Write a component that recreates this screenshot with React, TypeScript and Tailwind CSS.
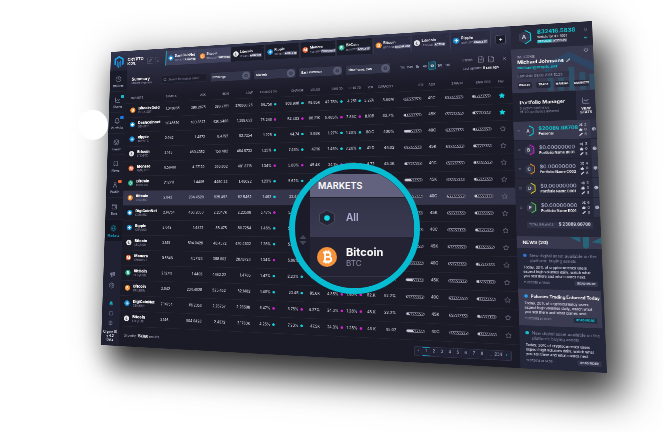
import React from "react";
import {
  Bell, Bookmark, ChartPie, ChevronDown, Cog, FileText, FileSpreadsheet, Globe, Grid2x2, Hexagon,
  Layers, LineChart, Megaphone, Menu, Pencil, Plus, Search, Settings, Shuffle, Star, User, Wallet, X, Power, ThumbsUp,
} from "lucide-react";

type Point = [number, number];

const BOARD_WIDTH = 960;
const BOARD_HEIGHT = 640;
const CORNERS: Point[] = [[111, 52], [592, 21], [607, 373], [101, 345]];

/** Perspective matrix that lays the flat board onto a four-cornered plane. */
function planeMatrix([p0, p1, p2, p3]: Point[], w: number, h: number) {
  const dx1 = p1[0] - p2[0], dx2 = p3[0] - p2[0], sx = p0[0] - p1[0] + p2[0] - p3[0];
  const dy1 = p1[1] - p2[1], dy2 = p3[1] - p2[1], sy = p0[1] - p1[1] + p2[1] - p3[1];
  const det = dx1 * dy2 - dx2 * dy1;
  const g = (sx * dy2 - dx2 * sy) / det;
  const k = (dx1 * sy - sx * dy1) / det;
  const m = [
    (p1[0] - p0[0] + g * p1[0]) / w, (p1[1] - p0[1] + g * p1[1]) / w, 0, g / w,
    (p3[0] - p0[0] + k * p3[0]) / h, (p3[1] - p0[1] + k * p3[1]) / h, 0, k / h,
    0, 0, 1, 0,
    p0[0], p0[1], 0, 1,
  ];
  return `matrix3d(${m.join(",")})`;
}

const ORANGE = "bg-[#f08a2c]";
const BLUE = "bg-[#1b8fd6]";
const WHITE = "bg-[#e4e4e6]";
const RED = "bg-[#ee6a3c]";
const GREEN = "bg-[#22a882]";

function Coin({ color, letter }: { color: string; letter: string }) {
  return (
    <span className={`flex size-3 shrink-0 items-center justify-center rounded-full text-[8px] leading-none font-bold ${color} ${color === WHITE ? "text-[#55566a]" : "text-white"}`}>
      {letter}
    </span>
  );
}

const TABS = [
  { name: "DashCoinNet", sub: "DSH/BTC", tag: "ANALYZE", color: BLUE, letter: "◆" },
  { name: "Bitcoin", sub: "BTC/USDT", tag: "WATCHED", color: ORANGE, letter: "₿" },
  { name: "Litecoin", sub: "LTC/BTC", tag: "ANALYZE", color: WHITE, letter: "Ł" },
  { name: "Ripple", sub: "XRP/BTC", tag: "ANALYZE", color: BLUE, letter: "✣" },
  { name: "Monero", sub: "XMR/BTC", tag: "EXCHANGE", color: RED, letter: "M" },
  { name: "BitCoin", sub: "BCH/BTC", tag: "ANALYZE", color: GREEN, letter: "₿" },
  { name: "Bitcoin", sub: "BTC/USD", tag: "EXCHANGE", color: ORANGE, letter: "₿" },
  { name: "Litecoin", sub: "LTC/USD", tag: "ACTIVE", color: WHITE, letter: "Ł" },
  { name: "Ripple", sub: "XRP/USD", tag: "ANALYZE", color: BLUE, letter: "✣" },
];

const NAV = [
  { label: "Wallets", icon: ChartPie, badge: "" },
  { label: "Charts", icon: LineChart, badge: "bg-[#14b8c4]" },
  { label: "Portfolio", icon: Bell, badge: "bg-[#1f74e0]" },
  { label: "Invest", icon: Layers, badge: "" },
  { label: "News", icon: Bookmark, badge: "" },
  { label: "Profile", icon: User, badge: "bg-[#ee6a3c]" },
  { label: "Bots", icon: Wallet, badge: "" },
  { label: "Markets", icon: Globe, badge: "" },
];

const COLS = [
  { head: "MARKETS", w: "w-[88px]" }, { head: "SYMBOL", w: "w-[48px]" }, { head: "ASK", w: "w-[44px]" },
  { head: "HIGH", w: "w-[50px]" }, { head: "LOW", w: "w-[51px]" }, { head: "CHANGE 1H", w: "w-[50px]" },
  { head: "CHANGE", w: "w-[56px]" }, { head: "VALUE", w: "w-[33px]" }, { head: "CHG 1D", w: "w-[45px]" },
  { head: "CHG 7D", w: "w-[36px]" }, { head: "VOL", w: "w-[25px]" }, { head: "CAPACITY", w: "w-[38px]" },
  { head: "RSI", w: "w-[56px]" }, { head: "ADX", w: "w-[22px]" }, { head: "SMA30", w: "w-[51px]" },
  { head: "EMA 200", w: "w-[49px]" }, { head: "Fav.", w: "w-[38px]" },
];

const ROWS = [
  ["Bitcoin Gold", "BTC/USDT", "1.048965", "1", "390.2675", "396.7751", "370860.25", "56.758", "508.908", "56.85K", "42.78%", "4.251", "5.27A", "8.68M"],
  ["Dashcoinnet", "DSH/BTC", "1.048620", "0", "400.3872", "420.5480", "1,389.652", "75.248", "54.402", "86.21K", "5.405%", "2.85C", "8.10B", "82.7%"],
  ["Ripple", "XRP/BTC", "2.042", "1", "1.4872", "8.4752", "82.7254", "1.225", "44.74", "5.88K", "1.27%", "1.28%", "80.C", "400%"],
  ["Bitcoin", "LTC/BTC", "2.145", "1", "460.4352", "150.482", "464.8732", "1.25%", "7.48%", "47.1K", "1.45%", "7.26%", "41.D", "44.02"],
  ["Monero", "XMR/BTC", "0.56481", "0", "4.27120", "386.802", "481.8716", "1.34%", "5.80%", "45.4K", "24.1%", "1.28%", "4.72", "45.3K"],
  ["BitCoin", "BCH/BTC", "2.12711", "1", "1.4405", "4460.22", "1.46022", "1.23%", "5.62%", "58.0K", "1.80%", "2.25%", "48.C", "45.4K"],
  ["Bitcoin", "BTC/USD", "2.042", "1", "234.4520", "525.452", "62.5462", "1.462", "23.44", "48.2K", "1.28%", "1.40%", "80.C", "42.4K"],
  ["DigiCoinNet", "DSH/USD", "2.14754", "0", "450.2058", "2.2347K", "2.23508", "5.47%", "5.75%", "45.1K", "1.28%", "1.40%", "48.C", "45.5K"],
  ["Ripple", "XRP/USD", "2.042", "1", "1.4872", "88.475", "80.7254", "1.48%", "5.36%", "42.4K", "1.44%", "1.28%", "40.C", "40.8K"],
  ["Bitcoin", "LTC/USD", "2.145", "1", "504.0428", "40.4572", "470.4532", "1.26%", "5.25%", "42.2K", "1.28%", "1.28%", "42.K", "41.5K"],
  ["Monero", "XMR/USD", "0.5648", "0", "4.37128", "388.802", "287.8728", "1.34%", "5.86%", "42.6K", "1.28%", "1.28%", "4.K", "42.4K"],
  ["BitCoin", "BCH/USD", "2.12711", "1", "1.4405", "4462.22", "1.4705", "1.42%", "2.23%", "86.1K", "1.28%", "1.28%", "40.K", "44.2K"],
  ["Bitcoin", "BTC/EUR", "2.042", "1", "234.4828", "525.452", "62.1482", "1.48%", "23.45", "95.6K", "4.85%", "1.40%", "82.K", "92.2%"],
  ["DigiCoinNet", "DSH/EUR", "2.14754", "0", "#6.2058", "2.23757", "2.23508", "5.47%", "8.75%", "4.27%", "24.3%", "1.28%", "48.K", "22.2%"],
  ["Bitcoin", "LTC/EUR", "2.146", "1", "504.0428", "2.4572", "2.1750K", "4.25%", "7.23%", "47.5K", "24.3%", "1.28%", "48.K", "45.02"],
];

const ROW_COINS = [
  [ORANGE, "₿"], [BLUE, "◆"], [BLUE, "✣"], [WHITE, "Ł"], [RED, "M"], [GREEN, "₿"], [ORANGE, "₿"], [BLUE, "◆"],
  [BLUE, "✣"], [WHITE, "Ł"], [RED, "M"], [GREEN, "₿"], [ORANGE, "₿"], [BLUE, "✣"], [WHITE, "Ł"],
];

function Meter({ level }: { level: number }) {
  const fill = ["w-px", "w-1", "w-3"][level];
  return (
    <span className="ml-auto flex h-[6px] w-[34px] overflow-hidden rounded-[3px] border border-[#77788a] bg-[repeating-linear-gradient(115deg,#9899a8_0_1px,#1b1a27_1px_3px)]">
      <span className={`${fill} bg-[#c9cad6]`} />
    </span>
  );
}

function Trend({ up }: { up: boolean }) {
  return <span className={`ml-1 inline-block size-[5px] rounded-full ${up ? "bg-[#12d3dc]" : "bg-[#d61fd6]"}`} />;
}

function Market({ row, index }: { row: string[]; index: number }) {
  const [name, pair, symbol, dir, ...v] = row;
  const up = dir === "1";
  return (
    <tr className={`h-8 border-b border-[#262636] ${index === 6 ? "bg-[#35364b]" : ""}`}>
      <th scope="row" className="pl-[10px] text-left">
        <span className="flex items-center gap-[7px]">
          <Coin color={ROW_COINS[index][0]} letter={ROW_COINS[index][1]} />
          <span className="flex flex-col whitespace-nowrap">
            <b className="text-[8px] leading-[9px] text-white">{name}</b>
            <span className="text-[6px] leading-[8px] font-normal text-[#9a9ab4]">{pair}</span>
          </span>
        </span>
      </th>
      <td className="pl-[3px] text-left">{symbol}</td>
      <td>{v[0]}</td>
      <td>{v[1]}</td>
      <td>{v[2]}</td>
      <td>{v[3]}<Trend up={up} /></td>
      <td>{v[4]}<Trend up={up} /></td>
      <td>{v[5]}</td>
      <td>{v[6]}<Trend up={up && index < 12} /></td>
      <td>{v[7]}<Trend up={up && index < 12} /></td>
      <td>{v[8]}</td>
      <td>{v[9]}</td>
      <td className="pr-1"><Meter level={index % 3} /></td>
      <td>{index % 2 ? "45K" : "40C"}</td>
      <td><Meter level={0} /></td>
      <td><Meter level={1} /></td>
      <td className="text-center">
        <button aria-label={`Favourite ${name}`} className="align-middle">
          <Star className={`size-[11px] ${index < 2 ? "fill-[#12d3dc] text-[#12d3dc]" : "text-[#6f7088]"}`} strokeWidth={2} />
        </button>
      </td>
    </tr>
  );
}

function Logo({ className }: { className: string }) {
  return (
    <svg viewBox="0 0 24 28" className={className} fill="none">
      <path d="M12 2 22 8v12l-3 2V10l-7-4-7 4v12l-3-2V8z" fill="#1ba5e8" />
      <path d="M7 13v11l3 2V11zM14 11v15l3-2V13z" fill="#1674d8" />
      <path d="M11 15h2v12h-2z" fill="#27c8f0" />
    </svg>
  );
}

function Sidebar() {
  return (
    <aside className="flex w-10 shrink-0 flex-col bg-linear-to-b from-[#34364e] from-0% via-[#202233] via-8% to-[#202233]">
      <nav className="flex flex-col pt-11">
        {NAV.map(({ label, icon: Icon, badge }, i) => (
          <a key={label} href="#nav" className={`flex h-[47px] flex-col items-center gap-[5px] border-b border-[#262839] pt-3 text-[7px] leading-[8px] font-semibold ${i === 7 ? "bg-[#161722] text-[#159dc0]" : "bg-[#1b1c2a] text-[#a9abc6]"}`}>
            <span className="relative">
              <Icon className="size-[14px] opacity-75" strokeWidth={2} />
              {badge && <span className={`absolute -top-1 -right-2 h-[7px] w-2 rounded-[2px] ${badge}`} />}
            </span>
            {label}
          </a>
        ))}
      </nav>
      <div className="mt-auto flex flex-col items-center gap-[10px] pb-2 text-[#7d7f9b]">
        <Megaphone className="size-[13px] fill-[#5c5e7a]" />
        <Settings className="mb-4 size-[14px]" />
        <Bell className="size-[10px] fill-[#12a9b5] text-[#12a9b5]" />
        <Hexagon className="size-[11px]" />
        <Grid2x2 className="size-[10px]" />
        <span className="text-center text-[7px] leading-[8px] font-semibold text-white">Crypto ID<br />v 4.2<br />Beta</span>
      </div>
    </aside>
  );
}

function Tabs() {
  return (
    <div className="flex h-[42px] items-end">
      <div className="flex w-[88px] items-center gap-1 pb-2">
        <span className="w-[34px] text-[9px] leading-[9px] font-bold text-white">CRYPTO<br /><span className="text-[7px]">ICON.</span></span>
        <button aria-label="Pin" className="ml-2 flex size-[14px] items-center justify-center border border-[#484a63] text-[#9a9cb8]"><Pencil className="size-2" /></button>
        <button aria-label="Menu" className="flex size-[14px] items-center justify-center border border-[#484a63] text-[#9a9cb8]"><Menu className="size-2" /></button>
      </div>
      <div className="flex pb-1">
        {TABS.map((tab, i) => (
          <button key={i} className={`flex h-8 w-[73px] items-center gap-[3px] border-r-2 border-[#3b3d55] pl-1 text-left ${i < 2 ? "bg-[#40425e]" : i < 6 ? "bg-[#1c1d2b]" : "bg-[#2b2c41]"} ${i === 0 ? "border-l-2 border-l-[#12c3cf]" : ""}`}>
            <Coin color={tab.color} letter={tab.letter} />
            <span className="flex min-w-0 flex-1 flex-col">
              <b className="text-[7px] leading-[10px] whitespace-nowrap text-white">{tab.name}</b>
              <span className="flex items-center justify-between text-[5px] leading-[8px] text-[#a6a8c2]">
                {tab.sub}
                <span className="rounded-[1px] bg-[#50526c] px-px font-bold text-white">{tab.tag}</span>
              </span>
            </span>
            <X className="mt-1 mr-px size-1 self-start text-[#8486a4]" />
          </button>
        ))}
      </div>
      <button aria-label="Add tab" className="mb-2 ml-2 flex size-[18px] items-center justify-center rounded-[2px] border border-[#50526c] bg-[#1c1d2b] text-white">
        <Plus className="size-2" strokeWidth={4} />
      </button>
    </div>
  );
}

function Toolbar() {
  return (
    <div className="flex h-[54px] items-center">
      <div className="w-[79px] pl-[11px]">
        <h1 className="text-[9px] leading-[10px] font-bold text-white">Summary</h1>
        <p className="text-[6px] leading-[8px] text-[#8e90ac]">Market overview</p>
      </div>
      <label className="flex h-[18px] w-[101px] items-center gap-1 border border-[#2a2b3e] bg-[#1d1e2c] px-1 text-[#a6a8c2]">
        <Search className="size-2" />
        <input aria-label="Search" placeholder="Search for market name" className="min-w-0 flex-1 bg-transparent text-[6px] outline-none placeholder:text-[#77798f]" />
      </label>
      <div className="ml-[10px] flex gap-2">
        {["Exchange", "Markets", "Base currency", "Timeframe, 24h"].map((name) => (
          <span key={name} className="flex h-[19px] w-[86px] items-center rounded-[2px] bg-[#34364b] pr-px">
            <select aria-label={name} className="w-full appearance-none bg-transparent pl-1 text-[6px] font-semibold text-white outline-none"><option>{name}</option></select>
            <span className="flex size-[17px] shrink-0 items-center justify-center rounded-full bg-[#585b74]"><span className="size-[7px] rounded-full border-2 border-[#34364b]" /></span>
          </span>
        ))}
      </div>
      <div className="ml-4 flex h-[18px] items-center rounded-[2px] bg-[#232436] text-[6px] font-semibold text-[#a6a8c2]">
        {["1m", "15m", "1h", "4h", "1D", "1W", "1M"].map((t) => (
          <button key={t} className={`h-4 w-[14px] ${t === "1D" ? "rounded-[2px] border border-[#159dc0] bg-[#284659] text-white" : ""}`}>{t}</button>
        ))}
      </div>
      <div className="mr-2 ml-auto flex flex-col gap-[6px] text-[6px] leading-[8px] text-[#a6a8c2]">
        <div className="flex items-center justify-end gap-1">
          Export
          <FileText className="ml-1 size-[14px]" strokeWidth={1} />
          <FileSpreadsheet className="size-[14px]" strokeWidth={1} />
          <X className="ml-2 size-[9px]" />
        </div>
        <span>Last update: <b className="text-white">8 sec ago</b></span>
      </div>
    </div>
  );
}

function Pagination() {
  return (
    <div className="flex h-10 items-center justify-between pr-[14px] pl-[11px] text-[7px] text-[#b9bad0]">
      <span>Showing <b className="text-white">15/360</b> results</span>
      <div className="flex h-[18px] items-center rounded-[2px] border border-[#34364b] bg-[#202233]">
        {["‹", "1", "2", "3", "4", "5", "6", "7", "8", "...", "234", "›"].map((p) => (
          <button key={p} className={`h-4 w-[14px] border-r border-[#2a2c3e] ${p === "1" ? "border-y border-y-[#159dc0]" : ""} ${p === "›" ? "font-bold text-[#12c3cf]" : ""}`}>{p}</button>
        ))}
      </div>
    </div>
  );
}

const PORTFOLIOS = [
  { id: "A", value: "$20089.68708", name: "Personal", ring: "text-[#12d3dc]" },
  { id: "B", value: "$0.00000000", name: "Portfolio Name B001", ring: "text-[#d61fd6]" },
  { id: "C", value: "$0.00000000", name: "Portfolio Name C002", ring: "text-[#e58a2b]" },
  { id: "D", value: "$0.00000000", name: "Portfolio Name D001", ring: "text-[#e3cf27]" },
  { id: "E", value: "$0.00000000", name: "Portfolio Name E001", ring: "text-[#49d04a]" },
];

function HexBadge({ letter, ring, className }: { letter: string; ring: string; className: string }) {
  return (
    <span className={`relative flex shrink-0 items-center justify-center font-bold text-[#c6c7d8] ${className}`}>
      <svg viewBox="0 0 24 28" className={`absolute inset-0 size-full ${ring}`} fill="none">
        <path d="M11 4 3 9v11l8 5 8-5V9z" fill="#36384b" stroke="#454860" />
        <path d="M13 1 22.500 7v14L13 27" stroke="currentColor" strokeWidth="2" />
      </svg>
      <span className="relative pr-[2px]">{letter}</span>
    </span>
  );
}

const NEWS = [
  { title: "New digital asset available on the platform: buying assets", dot: "bg-[#2d74d6]", active: false },
  { title: "Poloniex Trading Enforced Today", dot: "bg-[#2d9ae6]", active: true },
  { title: "New digital asset available on the platform: buying assets", dot: "bg-[#12c3cf]", active: false },
];

function RightPanel() {
  return (
    <aside className="flex w-[140px] shrink-0 flex-col bg-[#24263a] text-white">
      <header className="flex h-[46px] items-center gap-[10px] bg-[#272839] pl-3">
        <HexBadge letter="A" ring="text-[#12d3dc]" className="h-7 w-6 text-[11px]" />
        <div className="flex flex-1 flex-col">
          <b className="text-[10px] leading-[11px] text-[#12c8d2]">Ƀ32416.5838</b>
          <span className="text-[6px] leading-[9px]">Watch for ID: 1001</span>
          <span className="mt-px w-[50px] bg-[#55586f] text-[5px] leading-[7px] whitespace-nowrap"><span className="bg-[#12a9b5] px-px">PREMIUM</span> ACCOUNT</span>
        </div>
        <div className="mr-2 flex flex-col items-center gap-2 text-[#8e90ac]"><Bell className="size-[7px]" /><ChevronDown className="size-2 text-[#12c8d2]" strokeWidth={4} /></div>
      </header>

      <section className="relative flex h-[85px] flex-col overflow-hidden bg-[#393a50] pt-3 pl-[10px]">
        <svg viewBox="0 0 100 90" className="absolute top-2 right-0 h-[77px] w-[82px] opacity-60">
          <path d="M50 0 100 30v18L50 18 0 48V30z" fill="#274f70" />
          <path d="M4 54h12v36H4zM26 60h12v30H26zM48 36h12v54H48zM70 50h12v40H70zM90 54h10v36H90z" fill="#2b6078" />
        </svg>
        <div className="relative flex flex-col">
          <span className="text-[6px] leading-[8px] text-[#b9bad0]">WELCOME</span>
          <h2 className="flex items-center gap-1 text-[9px] leading-[12px] font-bold">Michael Johnsons <Pencil className="size-[7px]" /></h2>
          <a href="mailto:michael@crypto.net" className="text-[7px] leading-[9px] font-semibold text-[#12c8d2]">michael@crypto.net</a>
          <span className="mt-[6px] w-[88px] bg-[#303146] text-[6px] leading-[11px] text-[#a6a8c2]">Last visit: 09.09.2018 10:25</span>
          <div className="mt-[7px] flex gap-2">
            {["WALLET", "TRADE", "MANUAL", "MARKETS"].map((b) => (
              <button key={b} className="h-3 w-6 rounded-[2px] bg-[#262739] text-[5px] font-bold">{b}</button>
            ))}
          </div>
        </div>
        <Power className="absolute top-1 right-2 size-2 text-[#b9bad0]" />
      </section>

      <section className="flex h-[55px] bg-[#202130]">
        <div className="flex flex-1 flex-col justify-center pb-1 pl-3">
          <h2 className="text-[9px] leading-[14px] font-semibold whitespace-nowrap">Portfolio Manager</h2>
          <p className="text-[6px] leading-[7px] whitespace-nowrap text-[#9092ac]">5 active portfolios<br />of 20 portfolios allowed</p>
        </div>
        <button className="flex w-8 flex-col items-center justify-center gap-1 bg-[#2a2b3e] text-[6px] leading-[7px] font-bold text-white"><LineChart className="size-[14px] text-[#9092ac]" /><span>VIEW<br />STATS</span></button>
      </section>

      <ul>
        {PORTFOLIOS.map((p, i) => (
          <li key={p.id} className={`flex h-9 items-center border-b border-[#1f2030] pl-[6px] ${i === 0 ? "bg-[#393a50]" : "bg-[#26283a]"}`}>
            <Menu className="mr-[5px] size-[6px] shrink-0 text-[#77798f]" />
            <HexBadge letter={p.id} ring={p.ring} className="h-[22px] w-[18px] text-[8px]" />
            <span className="ml-2 flex min-w-0 flex-1 flex-col">
              <b className={`text-[9px] leading-[11px] ${i === 0 ? "text-[#12c8d2]" : "font-medium text-[#b4b6d2]"}`}>{p.value}</b>
              <span className="text-[6px] leading-[9px] font-semibold whitespace-nowrap">{p.name}</span>
            </span>
            <span className="mr-1 flex w-[15px] shrink-0 flex-col text-[6px] leading-[9px] text-[#d6d7e4]">
              <span className="flex items-center gap-[3px]"><Shuffle className="size-[6px]" strokeWidth={3} />{i + 2}</span>
              <span className="flex items-center gap-[3px]"><ThumbsUp className="size-[6px] fill-current" />0</span>
              <span className="flex items-center gap-[3px]"><Pencil className="size-[6px] fill-current" />8</span>
            </span>
            <span className="flex h-full w-[10px] shrink-0 items-center justify-center bg-[#303247]"><Cog className="size-[7px] text-[#c6c7d8]" strokeWidth={3} /></span>
          </li>
        ))}
      </ul>

      <div className="flex h-[35px] items-center bg-[#26283a] pb-2 pl-[18px]">
        <span className="flex h-3 w-[110px] items-center justify-between bg-[#303247] px-1 text-[5px] text-[#a6a8c2]">TOTAL BALANCE <b className="text-[7px] font-semibold text-[#dddeea]">$ 23089.66708</b></span>
      </div>

      <section className="flex flex-1 flex-col">
        <header className="flex h-[22px] items-center justify-between bg-[#393a50] pl-[10px]">
          <h2 className="text-[8px] font-bold">NEWS (20)</h2>
          <svg viewBox="0 0 50 22" className="h-[22px] w-[50px]"><path d="M0 1h16v9zM20 0h10v18l-5 4-5-4zM34 10 50 1v11z" fill="#26647a" /></svg>
        </header>
        {NEWS.map((n, i) => (
          <article key={i} className={`flex flex-col pt-[9px] pr-2 pl-[10px] ${n.active ? "mr-1 h-[66px] bg-[#3b3b51]" : "h-[74px]"}`}>
            <h3 className={`flex gap-[5px] text-[7px] leading-[9px] ${n.active ? "font-bold whitespace-nowrap text-white" : "text-[#8e90ac]"}`}>
              <span className={`mt-px size-[6px] shrink-0 rounded-full ${n.dot}`} />{n.title}
            </h3>
            <p className="mt-1 text-[6px] leading-[8px] font-medium text-[#e2e3ee]">Today, 20% of cryptocurrency users expect high volumes daily, watch what you sell there and what comes next.</p>
            <footer className="mt-[3px] flex items-center justify-between text-[5px] text-[#a6a8c2]">11.07.2018 at 14:50
              <button className={`h-[9px] rounded-[1px] px-1 text-[5px] font-bold ${n.active ? "bg-[#202e42] text-[#12c8d2]" : "bg-[#34364b] text-[#c6c7d8]"}`}>READ MORE</button>
            </footer>
          </article>
        ))}
      </section>
    </aside>
  );
}

function Lens() {
  return (
    <section className="absolute top-[163px] left-[289px] size-[131px] overflow-hidden rounded-full border-[6px] border-[#06bcd3] bg-[#1b1b2a]">
      <div className="flex h-full pt-[5px]">
        <div className="flex w-[15px] shrink-0 flex-col items-center pt-[61px]">
          <svg viewBox="0 0 8 10" className="h-[10px] w-2"><path d="M4 0 7.500 4H.5zM.5 6h7L4 10z" fill="#45465b" /></svg>
        </div>
        <div className="flex flex-1 flex-col bg-[#232333]">
          <h2 className="flex h-[23px] items-center bg-[#62627e] pl-2 text-[9px] font-semibold text-white">MARKETS</h2>
          <button className="flex h-10 items-center border-t border-[#202030] bg-linear-to-b from-[#323247] to-[#3a3a52] pl-2 text-[10px] font-semibold text-[#b3b2d6]">
            <svg viewBox="0 0 18 18" className="size-[18px]"><path d="m9 1 7.500 4.200v7.600L9 17l-7.500-4.200V5.200z" fill="#242434" stroke="#4a4a5e" /><circle cx="9" cy="9" r="2.800" fill="#12dce8" /></svg>
            <span className="ml-[10px]">All</span>
          </button>
          <button className="flex h-10 items-center border-b border-[#33334a] pl-[7px] text-left">
            <span className="flex size-5 items-center justify-center rounded-full bg-[#f7933a] text-white">
              <svg viewBox="0 0 20 20" className="size-5" fill="none" stroke="currentColor" strokeWidth="1.800">
                <path d="M6 5.500h5.200a2.200 2.200 0 0 1 0 4.400H8m0 0h4a2.300 2.300 0 0 1 0 4.600H6M8 5.500v9M9 3.500v2M11.500 3.500v2M9 14.500v2M11.500 14.500v2" />
              </svg>
            </span>
            <span className="ml-[9px] flex flex-col">
              <b className="text-[11px] leading-[12px] text-white">Bitcoin</b>
              <span className="text-[8px] leading-[10px] text-[#8e8fac]">BTC</span>
            </span>
          </button>
        </div>
      </div>
    </section>
  );
}

export default function App() {
  return (
    <main className="relative h-screen overflow-hidden bg-white font-['Inter','Liberation_Sans',sans-serif]">
      <div
        className="flex h-[640px] w-[960px] origin-top-left bg-[#1b1a27] shadow-[20px_40px_60px_0px_rgba(0,0,0,0.8),0px_0px_80px_0px_rgba(0,0,0,0.25)]"
        style={{ transform: planeMatrix(CORNERS, BOARD_WIDTH, BOARD_HEIGHT) }}
      >
        <Sidebar />
        <div className="flex min-w-0 flex-1 flex-col bg-linear-to-b from-[#34364e] from-0% via-[#1b1a27] via-17% to-[#1b1a27]">
          <Tabs />
          <Toolbar />
          <table className="w-full table-fixed border-collapse text-right text-[7px] leading-[8px] font-medium text-[#d3d4e0]">
            <thead>
              <tr className="h-[22px] border-b border-[#262636] text-[6px] text-[#9a9cb6]">
                {COLS.map((c, i) => (
                  <th key={c.head + i} scope="col" className={`${c.w} font-medium whitespace-nowrap ${i === 0 ? "pl-[10px] text-left" : i === 1 ? "pl-[3px] text-left" : i === 16 ? "text-center" : ""}`}>{c.head}</th>
                ))}
              </tr>
            </thead>
            <tbody>{ROWS.map((r, i) => <Market key={i} row={r} index={i} />)}</tbody>
          </table>
          <Pagination />
        </div>
        <RightPanel />
        <Logo className="absolute top-2 left-[6px] h-[30px] w-7" />
      </div>
      <div className="absolute top-[110px] left-[78px] size-[30px] rounded-full bg-white" />
      <Lens />
    </main>
  );
}
